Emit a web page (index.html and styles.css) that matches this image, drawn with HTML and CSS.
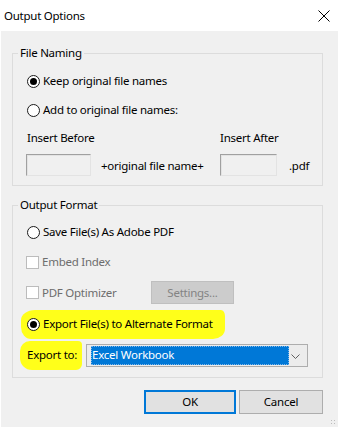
FILE: index.html
```html
<!DOCTYPE html>
<html>
<head>
<meta charset="utf-8">
<link rel="stylesheet" href="styles.css">
</head>
<body>
<div class="dialog">
  <div class="titlebar">
    <span class="title">Output Options</span>
    <svg class="close" width="12" height="12" viewBox="0 0 12 12"><path d="M0.5 0.5 L11.5 11.5 M11.5 0.5 L0.5 11.5" stroke="#000" stroke-width="1" fill="none"/></svg>
  </div>
  <div class="client">
    <fieldset class="group g1">
      <legend>File Naming</legend>
      <div class="row r1"><span class="radio checked"></span><span class="lbl">Keep original file names</span></div>
      <div class="row r2"><span class="radio"></span><span class="lbl">Add to original file names:</span></div>
      <div class="insert">
        <span class="cap c1">Insert Before</span>
        <span class="cap c3">Insert After</span>
        <span class="input"></span>
        <span class="mid">+original file name+</span>
        <span class="input"></span>
        <span class="ext">.pdf</span>
      </div>
    </fieldset>
    <fieldset class="group g2">
      <legend>Output Format</legend>
      <div class="row r3"><span class="radio"></span><span class="lbl">Save File(s) As Adobe PDF</span></div>
      <div class="row r4"><span class="check"></span><span class="lbl dis">Embed Index</span></div>
      <div class="row r5"><span class="check"></span><span class="lbl dis opt">PDF Optimizer</span><span class="btn settings">Settings...</span></div>
      <div class="row r6"><span class="hl hl1"><span class="radio checked"></span><span class="lbl">Export File(s) to Alternate Format</span></span></div>
      <div class="row r7"><span class="hl hl2">Export to:</span>
        <div class="select"><span class="sel">Excel Workbook</span>
          <svg class="chev" width="9" height="5" viewBox="0 0 9 5"><path d="M0.5 0.5 L4.5 4.5 L8.5 0.5" stroke="#606060" fill="none"/></svg>
        </div>
      </div>
    </fieldset>
    <div class="buttons">
      <span class="btn ok">OK</span>
      <span class="btn cancel">Cancel</span>
    </div>
    <div class="grip"></div>
  </div>
</div>
</body>
</html>
```
FILE: styles.css
```css
* { box-sizing: border-box; }
html, body { margin: 0; padding: 0; background: #fff; }
body { width: 339px; height: 427px; overflow: hidden; font-family: "Noto Sans", "Open Sans", sans-serif; font-size: 11.5px; letter-spacing: -0.25px; color: #000; }
.dialog { width: 339px; height: 427px; display: flex; flex-direction: column; }
.titlebar { height: 31px; display: flex; align-items: center; justify-content: space-between; padding: 0 9px 0 4px; }
.title { line-height: 16px; }
.client { position: relative; flex: 1; background: #f0f0f0; margin: 0 1px 0 1px; padding: 14px 15px 0 11px; }
.group { border: 1px solid #dcdcdc; margin: 0; padding: 0 0 0 14px; min-width: 0; }
.group legend { padding: 0 2px; margin-left: -9px; line-height: 16px; height: 16px; }
.g1 { padding-bottom: 9px; }
.g2 { margin-top: 11px; padding-bottom: 10px; }
.row { display: flex; align-items: center; height: 20px; }
.r1 { margin-top: 10px; }
.r2 { margin-top: 9px; }
.r3 { margin-top: 9px; }
.r4 { margin-top: 10px; }
.r5 { margin-top: 9px; height: 23px; }
.r6 { margin-top: 10px; }
.r7 { margin-top: 10px; height: 23px; }
.radio { width: 13px; height: 13px; border: 1px solid #1a1a1a; border-radius: 50%; background: #fff; display: inline-flex; align-items: center; justify-content: center; flex: none; }
.radio.checked::after { content: ""; width: 7px; height: 7px; border-radius: 50%; background: #000; }
.lbl { margin-left: 3px; line-height: 16px; white-space: nowrap; }
.check { width: 13px; height: 13px; border: 1px solid #bcbcbc; background: #fff; flex: none; margin-left: -1px; }
.dis { color: #6d6d6d; margin-left: 3px; }
.opt { width: 109px; }
.btn { display: inline-flex; align-items: center; justify-content: center; height: 23px; border: 1px solid #adadad; background: #e1e1e1; line-height: 16px; }
.settings { width: 83px; background: #cccccc; border-color: #bfbfbf; color: #838383; }
.insert { display: grid; grid-template-columns: 65px 129px 57px auto; grid-template-rows: 20px 22px; row-gap: 6px; margin: 8px 0 0 -1px; }
.cap { line-height: 16px; align-self: center; white-space: nowrap; }
.c1 { grid-column: 1 / span 2; grid-row: 1; padding-left: 1px; }
.c3 { grid-column: 3 / span 2; grid-row: 1; }
.input { grid-row: 2; height: 22px; border: 1px solid #a0a0a0; border-right-color: #e3e3e3; border-bottom-color: #e3e3e3; background: #f0f0f0; box-shadow: inset 1px 1px 0 #e3e3e3; }
.mid { grid-row: 2; align-self: center; padding-left: 10px; white-space: nowrap; }
.ext { grid-row: 2; align-self: center; padding-left: 12px; }
.hl { background: #ffff1a; }
.hl1 { display: inline-flex; align-items: center; padding: 6px 12px 7px 6px; margin: -6px 0 -7px -6px; border-radius: 14px 4px 12px 10px / 10px 6px 10px 12px; }
.hl2 { width: 62px; flex: none; padding: 6px 0 7px 7px; margin: 0 4px 0 -7px; border-radius: 10px 4px 6px 12px; line-height: 16px; white-space: nowrap; }
.select { width: 222px; height: 23px; border: 1px solid #adadad; background: #ececec; display: flex; align-items: center; padding: 1px 0 1px 4px; position: relative; }
.sel { flex: 1; height: 19px; margin-right: 18px; background: #0078d7; color: #fff; line-height: 18px; padding-left: 1px; outline: 1px dotted #7fb6e8; outline-offset: -1px; }
.chev { position: absolute; right: 7px; top: 9px; }
.buttons { display: flex; justify-content: flex-end; gap: 3px; margin-top: 12px; }
.ok { width: 92px; height: 24px; border: 2px solid #0078d7; }
.cancel { width: 84px; height: 24px; }
.grip { position: absolute; right: 2px; bottom: 2px; width: 6px; height: 6px; background-image: radial-gradient(circle, #bcbcbc 0.8px, transparent 1px); background-size: 3px 3px; }
```
